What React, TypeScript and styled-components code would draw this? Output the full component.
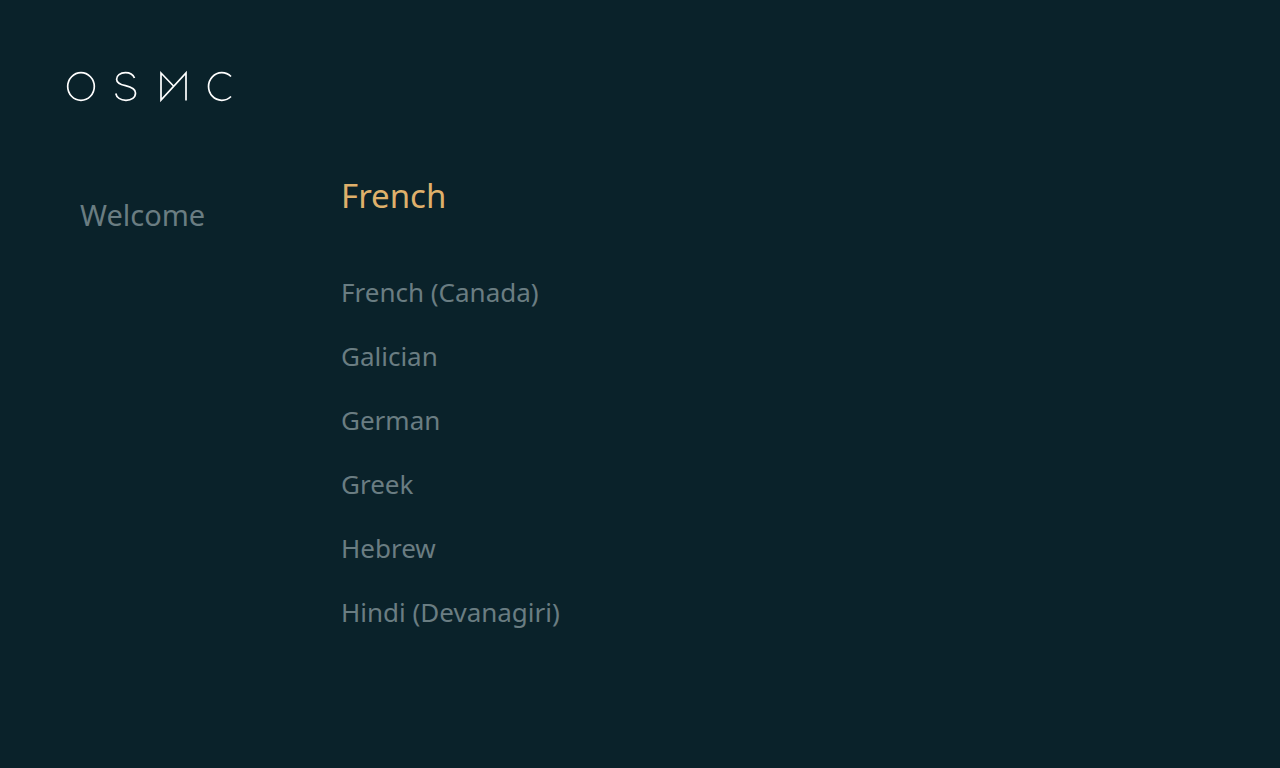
import React, { useState } from "react";
import styled, { createGlobalStyle } from "styled-components";

const GlobalStyle = createGlobalStyle`
  * { box-sizing: border-box; }
  body {
    margin: 0;
    background: #0a222a;
    font-family: "Noto Sans", sans-serif;
  }
`;

const Page = styled.div`
  min-height: 100vh;
  padding: 64px 64px 0;
  background: #0a222a;
`;

const Logo = styled.svg`
  display: block;
  width: 172px;
  height: 44px;
  fill: none;
  stroke: #fff;
  stroke-width: 1.7;
`;

const Columns = styled.div`
  display: grid;
  grid-template-columns: 261px 1fr;
  margin-top: 56px;
  padding-left: 16px;
`;

const StepTitle = styled.h1`
  margin: 27px 0 0;
  font-size: 29px;
  line-height: 48px;
  font-weight: 400;
  color: #6a7d82;
`;

const LanguageList = styled.ul`
  margin: 0;
  padding: 0;
  list-style: none;
`;

const LanguageItem = styled.li<{ $active: boolean }>`
  margin-bottom: ${(p) => (p.$active ? 32 : 0)}px;
`;

const LanguageButton = styled.button<{ $active: boolean }>`
  display: block;
  padding: 0;
  border: 0;
  background: none;
  font-family: inherit;
  font-size: ${(p) => (p.$active ? 33 : 26)}px;
  line-height: 64px;
  color: ${(p) => (p.$active ? "#dfb06b" : "#6a7d82")};
  cursor: pointer;
`;

const languages = [
  "French",
  "French (Canada)",
  "Galician",
  "German",
  "Greek",
  "Hebrew",
  "Hindi (Devanagiri)",
];

export default function App() {
  const [active, setActive] = useState("French");
  return (
    <Page>
      <GlobalStyle />
      <header>
        <Logo viewBox="0 0 172 44" role="img" aria-label="OSMC">
          <ellipse cx="17" cy="22.5" rx="13.3" ry="13.8" />
          <path d="M70.500 14C69 10.500 66 8.700 61.500 8.700C56 8.700 52.600 11.500 52.600 15.200C52.600 19 56 20.500 61.500 21.700C67.500 23 71.500 24.800 71.500 29C71.500 33.500 67.500 36.300 62 36.300C56.500 36.300 52.500 33.500 51.800 29.500" />
          <path d="M122 36.500V9L97 36V9L109.500 22" />
          <path d="M167 12.500A13.300 13.800 0 1 0 167 32.500" />
        </Logo>
      </header>
      <Columns>
        <StepTitle>Welcome</StepTitle>
        <LanguageList>
          {languages.map((name) => (
            <LanguageItem key={name} $active={name === active}>
              <LanguageButton
                type="button"
                $active={name === active}
                aria-pressed={name === active}
                onClick={() => setActive(name)}
              >
                {name}
              </LanguageButton>
            </LanguageItem>
          ))}
        </LanguageList>
      </Columns>
    </Page>
  );
}
